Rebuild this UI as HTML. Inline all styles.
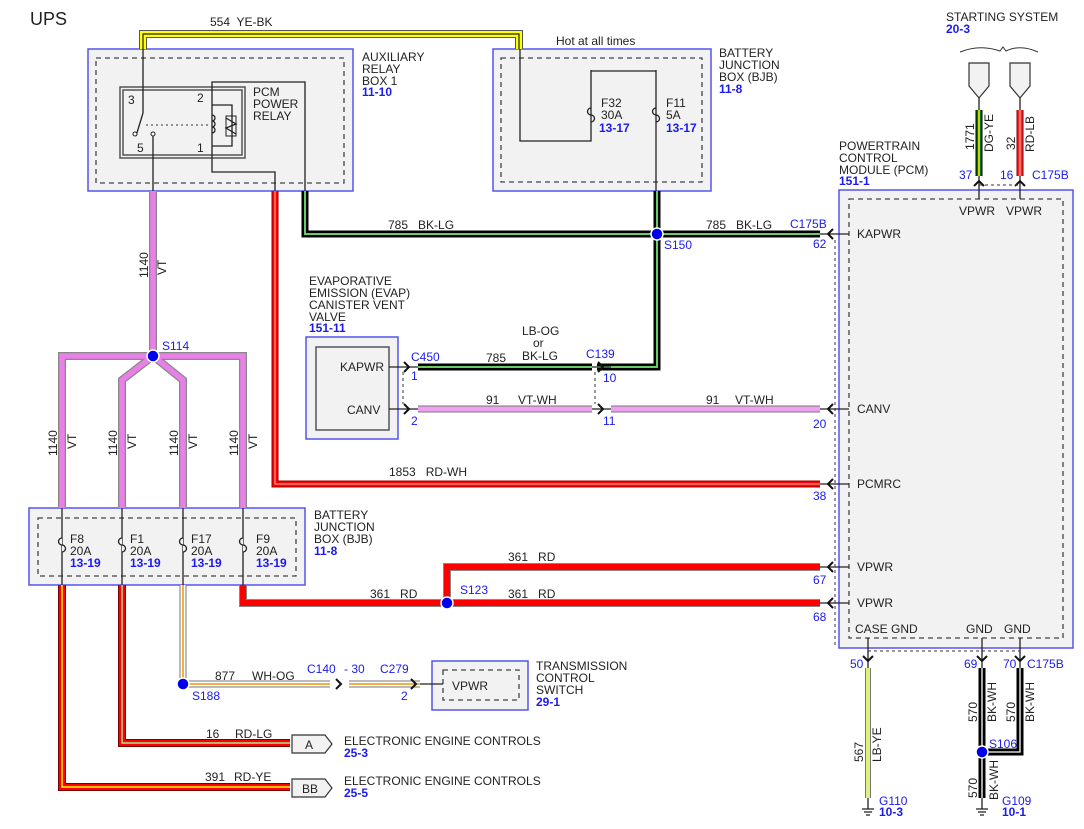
<!DOCTYPE html>
<html><head><meta charset="utf-8"><style>
html,body{margin:0;padding:0;background:#fff}
svg{display:block}
text{font-family:"Liberation Sans",sans-serif;font-size:12px;fill:#222;white-space:pre}
.b{fill:#1a1aee}
.bb{fill:#1a1aee;font-weight:bold}
.box{fill:#f2f2f2;stroke:#5555ee;stroke-width:1.5}
.dash{fill:none;stroke:#444;stroke-width:1.3;stroke-dasharray:5,4}
.ln{fill:none;stroke:#222;stroke-width:1.3}
.ar{fill:none;stroke:#111;stroke-width:2}
</style></head><body>
<svg width="1084" height="829" viewBox="0 0 1084 829" xmlns="http://www.w3.org/2000/svg">
<text x="30" y="25" style="font-size:18px">UPS</text>

<rect class="box" x="88" y="49" width="265" height="142"/>
<rect class="dash" x="96" y="58" width="248" height="125"/>
<rect class="box" x="493" y="49" width="218" height="142"/>
<rect class="dash" x="501" y="58" width="201" height="124"/>
<rect class="box" x="839" y="190" width="234" height="458"/>
<rect class="dash" x="849" y="199" width="214" height="439"/>
<rect class="box" x="306" y="337" width="92" height="102"/>
<rect x="316" y="347" width="73" height="83" fill="#f2f2f2" stroke="#555" stroke-width="1.5"/>
<rect class="box" x="29" y="508" width="276" height="77"/>
<rect class="dash" x="38" y="518" width="258" height="58"/>
<rect class="box" x="432" y="661" width="96" height="49"/>
<rect class="dash" x="443" y="670" width="76" height="30"/>

<rect x="120" y="87" width="125" height="71" fill="none" stroke="#555" stroke-width="1.5"/>
<rect x="123" y="90" width="119" height="65" fill="none" stroke="#555" stroke-width="1.5"/>
<path class="ln" d="M143,34 V113 M143,113 L136,136 M153,136 V191"/>
<circle cx="135" cy="134" r="2" fill="#fff" stroke="#222"/>
<circle cx="153" cy="134" r="2" fill="#fff" stroke="#222"/>
<path d="M146,125 H208" stroke="#333" stroke-dasharray="2,3"/>
<path class="ln" d="M275,191 V172 H212 V105 M212,146 V82 H305 V191 M212,105 H232 V146 H212"/>
<path class="ln" d="M212,115 a3,3 0 0 1 0,6 a3,3 0 0 1 0,6 a3,3 0 0 1 0,6"/>
<rect x="226" y="116" width="10" height="20" fill="none" stroke="#222"/>
<path class="ln" d="M226,118 L236,124 L226,128 L236,134"/>
<text x="128" y="104">3</text><text x="197" y="102">2</text><text x="137" y="152">5</text><text x="197" y="152">1</text>
<text x="253" y="96">PCM</text><text x="253" y="108">POWER</text><text x="253" y="120">RELAY</text>
<text x="362" y="61">AUXILIARY</text><text x="362" y="73">RELAY</text><text x="362" y="85">BOX 1</text><text class="bb" x="362" y="96">11-10</text>

<path class="ln" d="M520,48 V141 H591 V70 M591,71 H656 V234 M591,141 V125 M656,70 V120"/>
<path class="ln" d="M591,108 a3,3 0 0 0 0,7 a3,3 0 0 1 0,7 M656,108 a3,3 0 0 0 0,7 a3,3 0 0 1 0,7" fill="#f2f2f2"/>
<text x="556" y="45">Hot at all times</text>
<text x="601" y="107">F32</text><text x="601" y="119">30A</text><text class="bb" x="599" y="132">13-17</text>
<text x="666" y="107">F11</text><text x="666" y="119">5A</text><text class="bb" x="666" y="132">13-17</text>
<text x="719" y="57">BATTERY</text><text x="719" y="69">JUNCTION</text><text x="719" y="81">BOX (BJB)</text><text class="bb" x="719" y="93">11-8</text>

<defs>
<path id="wYE" d="M143,49 V34 H519 V49"/>
<path id="wBK1" d="M305,191 V234 H820"/>
<path id="wBK2" d="M657,191 V367 H597"/>
<path id="wBK3" d="M418,367 H592"/>
<path id="wRDWH" d="M275,191 V484 H820"/>
<path id="wVT" d="M153,191 V356 M62,508 V356 H243 V508 M122,508 V380 L153,356 L183,380 V508"/>
<path id="wVTWH1" d="M418,409 H592"/>
<path id="wVTWH2" d="M611,409 H820"/>
<path id="wRDYE" d="M62,585 V787 H290"/>
<path id="wRDLG" d="M122,585 V743 H290"/>
<path id="wWHOG" d="M183,585 V684 H330 M349,684 H420"/>
<path id="wRD" d="M243,585 V603 H820 M447,603 V567 H820"/>
<path id="wDG" d="M979,110 V176"/>
<path id="wRL" d="M1020,110 V176"/>
<path id="wLB" d="M868,668 V798"/>
<path id="wBW" d="M982,668 V798 M982,752 H1020 V668"/>
</defs>
<g fill="none">
<use href="#wYE" stroke="#555" stroke-width="8"/><use href="#wYE" stroke="#ff0" stroke-width="6"/><use href="#wYE" stroke="#222" stroke-width="1.2"/>
<use href="#wVT" stroke="#888" stroke-width="8" stroke-linejoin="miter"/><use href="#wVT" stroke="#e880e8" stroke-width="5.5"/>
<use href="#wRDWH" stroke="#900" stroke-width="7"/><use href="#wRDWH" stroke="#f00" stroke-width="5"/><use href="#wRDWH" stroke="#fbb" stroke-width="1"/>
<use href="#wBK1" stroke="#000" stroke-width="7"/><use href="#wBK1" stroke="#6c6" stroke-width="2"/>
<use href="#wBK2" stroke="#000" stroke-width="7"/><use href="#wBK2" stroke="#6c6" stroke-width="2"/>
<use href="#wBK3" stroke="#000" stroke-width="7"/><use href="#wBK3" stroke="#6c6" stroke-width="2"/>
<use href="#wVTWH1" stroke="#777" stroke-width="7"/><use href="#wVTWH1" stroke="#f0a0f0" stroke-width="5"/>
<use href="#wVTWH2" stroke="#777" stroke-width="7"/><use href="#wVTWH2" stroke="#f0a0f0" stroke-width="5"/>
<use href="#wRDYE" stroke="#700" stroke-width="8"/><use href="#wRDYE" stroke="#f00" stroke-width="6"/><use href="#wRDYE" stroke="#ff0" stroke-width="1.5"/>
<use href="#wRDLG" stroke="#700" stroke-width="8"/><use href="#wRDLG" stroke="#f00" stroke-width="6"/><use href="#wRDLG" stroke="#9e9" stroke-width="1.5"/>
<use href="#wWHOG" stroke="#777" stroke-width="7"/><use href="#wWHOG" stroke="#fff" stroke-width="5"/><use href="#wWHOG" stroke="#f5b040" stroke-width="2"/>
<use href="#wRD" stroke="#888" stroke-width="8"/><use href="#wRD" stroke="#f00" stroke-width="6"/>
<use href="#wDG" stroke="#000" stroke-width="7"/><use href="#wDG" stroke="#0a6a1a" stroke-width="5"/><use href="#wDG" stroke="#ff0" stroke-width="1.5"/>
<use href="#wRL" stroke="#700" stroke-width="7"/><use href="#wRL" stroke="#f22" stroke-width="5"/><use href="#wRL" stroke="#fbb" stroke-width="1"/>
<use href="#wLB" stroke="#777" stroke-width="6"/><use href="#wLB" stroke="#def080" stroke-width="4"/>
<use href="#wBW" stroke="#000" stroke-width="7"/><use href="#wBW" stroke="#fff" stroke-width="1.3"/>
</g>

<g fill="#0000ee" stroke="#fff" stroke-width="1.5">
<circle cx="153" cy="356" r="6"/><circle cx="657" cy="234" r="6"/><circle cx="447" cy="603" r="6"/><circle cx="183" cy="684" r="6"/><circle cx="982" cy="752" r="6"/>
</g>
<text class="b" x="162" y="350">S114</text><text class="b" x="664" y="249">S150</text><text class="b" x="460" y="594">S123</text><text class="b" x="192" y="700">S188</text><text class="b" x="989" y="748">S106</text>

<path class="ln" d="M62,508 V585 M122,508 V585 M183,508 V585 M243,508 V585"/>
<g fill="#f2f2f2" stroke="#222" stroke-width="1.3">
<path d="M62,538 a3,3 0 0 0 0,7 a3,3 0 0 1 0,7 M122,538 a3,3 0 0 0 0,7 a3,3 0 0 1 0,7 M183,538 a3,3 0 0 0 0,7 a3,3 0 0 1 0,7 M243,538 a3,3 0 0 0 0,7 a3,3 0 0 1 0,7"/>
</g>
<text x="70" y="543">F8</text><text x="70" y="555">20A</text><text class="bb" x="70" y="567">13-19</text>
<text x="130" y="543">F1</text><text x="130" y="555">20A</text><text class="bb" x="130" y="567">13-19</text>
<text x="191" y="543">F17</text><text x="191" y="555">20A</text><text class="bb" x="191" y="567">13-19</text>
<text x="256" y="543">F9</text><text x="256" y="555">20A</text><text class="bb" x="256" y="567">13-19</text>
<text x="314" y="519">BATTERY</text><text x="314" y="531">JUNCTION</text><text x="314" y="543">BOX (BJB)</text><text class="bb" x="314" y="555">11-8</text>

<g>
<text transform="translate(148,278) rotate(-90)">1140</text><text transform="translate(166,275) rotate(-90)">VT</text>
<text transform="translate(57,456) rotate(-90)">1140</text><text transform="translate(76,449) rotate(-90)">VT</text>
<text transform="translate(117,456) rotate(-90)">1140</text><text transform="translate(136,449) rotate(-90)">VT</text>
<text transform="translate(178,456) rotate(-90)">1140</text><text transform="translate(197,449) rotate(-90)">VT</text>
<text transform="translate(238,456) rotate(-90)">1140</text><text transform="translate(257,449) rotate(-90)">VT</text>
<text transform="translate(974,150) rotate(-90)">1771</text><text transform="translate(993,152) rotate(-90)">DG-YE</text>
<text transform="translate(1015,150) rotate(-90)">32</text><text transform="translate(1034,152) rotate(-90)">RD-LB</text>
<text transform="translate(863,762) rotate(-90)">567</text><text transform="translate(881,762) rotate(-90)">LB-YE</text>
<text transform="translate(977,722) rotate(-90)">570</text><text transform="translate(996,722) rotate(-90)">BK-WH</text>
<text transform="translate(1015,722) rotate(-90)">570</text><text transform="translate(1034,722) rotate(-90)">BK-WH</text>
<text transform="translate(977,798) rotate(-90)">570</text><text transform="translate(998,800) rotate(-90)">BK-WH</text>
</g>

<text x="210" y="26">554  YE-BK</text>
<text x="388" y="229">785   BK-LG</text>
<text x="706" y="229">785   BK-LG</text>
<text x="389" y="476">1853   RD-WH</text>
<text x="522" y="335">LB-OG</text><text x="533" y="347">or</text><text x="522" y="360">BK-LG</text>
<text x="486" y="362">785</text>
<text x="486" y="404">91</text><text x="518" y="404">VT-WH</text>
<text x="706" y="404">91</text><text x="735" y="404">VT-WH</text>
<text x="508" y="561">361   RD</text>
<text x="508" y="598">361   RD</text>
<text x="370" y="598">361   RD</text>
<text x="215" y="680">877</text><text x="252" y="680">WH-OG</text>
<text x="206" y="738">16</text><text x="235" y="738">RD-LG</text>
<text x="205" y="781">391</text><text x="234" y="781">RD-YE</text>

<text x="309" y="285">EVAPORATIVE</text><text x="309" y="297">EMISSION (EVAP)</text><text x="309" y="309">CANISTER VENT</text><text x="309" y="321">VALVE</text><text class="bb" x="309" y="332">151-11</text>
<text x="340" y="371">KAPWR</text><text x="347" y="414">CANV</text>
<path class="ln" d="M389,367 H418 M389,409 H418 M592,367 H611 M592,409 H611"/>
<path class="ar" d="M404,362 L409,367 L404,372 M404,404 L409,409 L404,414 M598,362 L603,367 L598,372 M598,404 L603,409 L598,414"/>
<path d="M403,372 V404 M595,372 V404" stroke="#333" stroke-dasharray="3,3"/>
<text class="b" x="411" y="361">C450</text><text class="b" x="411" y="380">1</text><text class="b" x="411" y="425">2</text>
<text class="b" x="586" y="358">C139</text><text class="b" x="603" y="382">10</text><text class="b" x="603" y="425">11</text>

<text x="839" y="150">POWERTRAIN</text><text x="839" y="162">CONTROL</text><text x="839" y="174">MODULE (PCM)</text><text class="bb" x="839" y="185">151-1</text>
<path class="ln" d="M820,234 H849 M820,409 H849 M820,484 H849 M820,567 H849 M820,603 H849"/>
<path class="ar" d="M833,229 L828,234 L833,239 M833,404 L828,409 L833,414 M833,479 L828,484 L833,489 M833,562 L828,567 L833,572 M833,598 L828,603 L833,608"/>
<path d="M835,240 V648" stroke="#333" stroke-dasharray="3,3"/>
<text x="857" y="238">KAPWR</text><text x="857" y="413">CANV</text><text x="857" y="488">PCMRC</text><text x="857" y="571">VPWR</text><text x="857" y="607">VPWR</text>
<text class="b" x="790" y="228">C175B</text><text class="b" x="813" y="248">62</text><text class="b" x="813" y="428">20</text><text class="b" x="813" y="500">38</text><text class="b" x="813" y="584">67</text><text class="b" x="813" y="621">68</text>
<path class="ln" d="M979,176 V199 M1020,176 V199"/>
<path class="ar" d="M974,186 L979,181 L984,186 M1015,186 L1020,181 L1025,186"/>
<path d="M979,185 H1020" stroke="#333" stroke-dasharray="3,3"/>
<text x="959" y="215">VPWR</text><text x="1006" y="215">VPWR</text>
<text class="b" x="959" y="179">37</text><text class="b" x="1000" y="179">16</text><text class="b" x="1032" y="179">C175B</text>
<path d="M969,63 H989 V86 L979,98 L969,86 Z M1010,63 H1030 V86 L1020,98 L1010,86 Z" fill="#f2f2f2" stroke="#333" stroke-width="1.2"/>
<path class="ln" d="M979,98 V110 M1020,98 V110"/>
<path d="M960,52 Q980,44 1000,51 L1003,47 L1006,51 Q1020,44 1038,52" fill="none" stroke="#333"/>
<text x="946" y="21">STARTING SYSTEM</text><text class="bb" x="946" y="33">20-3</text>
<text x="855" y="633">CASE GND</text><text x="966" y="633">GND</text><text x="1004" y="633">GND</text>
<path class="ln" d="M868,638 V668 M982,638 V668 M1020,638 V668"/>
<path class="ar" d="M863,656 L868,661 L873,656 M977,656 L982,661 L987,656 M1015,656 L1020,661 L1025,656"/>
<path d="M868,651 H1020" stroke="#333" stroke-dasharray="3,3"/>
<text class="b" x="850" y="668">50</text><text class="b" x="964" y="668">69</text><text class="b" x="1003" y="668">70</text><text class="b" x="1027" y="668">C175B</text>
<path class="ln" d="M868,798 V809 M862,809 H874 M864,812 H872 M866,815 H870 M982,798 V809 M976,809 H988 M978,812 H986 M980,815 H984"/>
<text class="b" x="879" y="805">G110</text><text class="bb" x="879" y="816">10-3</text>
<text class="b" x="1002" y="805">G109</text><text class="bb" x="1002" y="816">10-1</text>

<path class="ln" d="M420,684 H443"/>
<path class="ar" d="M336,679 L341,684 L336,689 M411,679 L416,684 L411,689"/>
<text class="b" x="307" y="673">C140</text><text class="b" x="344" y="673">- 30</text><text class="b" x="380" y="673">C279</text><text class="b" x="401" y="700">2</text>
<text x="452" y="690">VPWR</text>
<text x="536" y="670">TRANSMISSION</text><text x="536" y="682">CONTROL</text><text x="536" y="694">SWITCH</text><text class="bb" x="536" y="706">29-1</text>

<path d="M292,735 H325 L332,744 L325,753 H292 Z M292,779 H325 L332,788 L325,797 H292 Z" fill="#f2f2f2" stroke="#333" stroke-width="1.2"/>
<text x="305" y="749">A</text><text x="302" y="793">BB</text>
<text x="344" y="745">ELECTRONIC ENGINE CONTROLS</text><text class="bb" x="344" y="757">25-3</text>
<text x="344" y="785">ELECTRONIC ENGINE CONTROLS</text><text class="bb" x="344" y="797">25-5</text>
</svg>
</body></html>
